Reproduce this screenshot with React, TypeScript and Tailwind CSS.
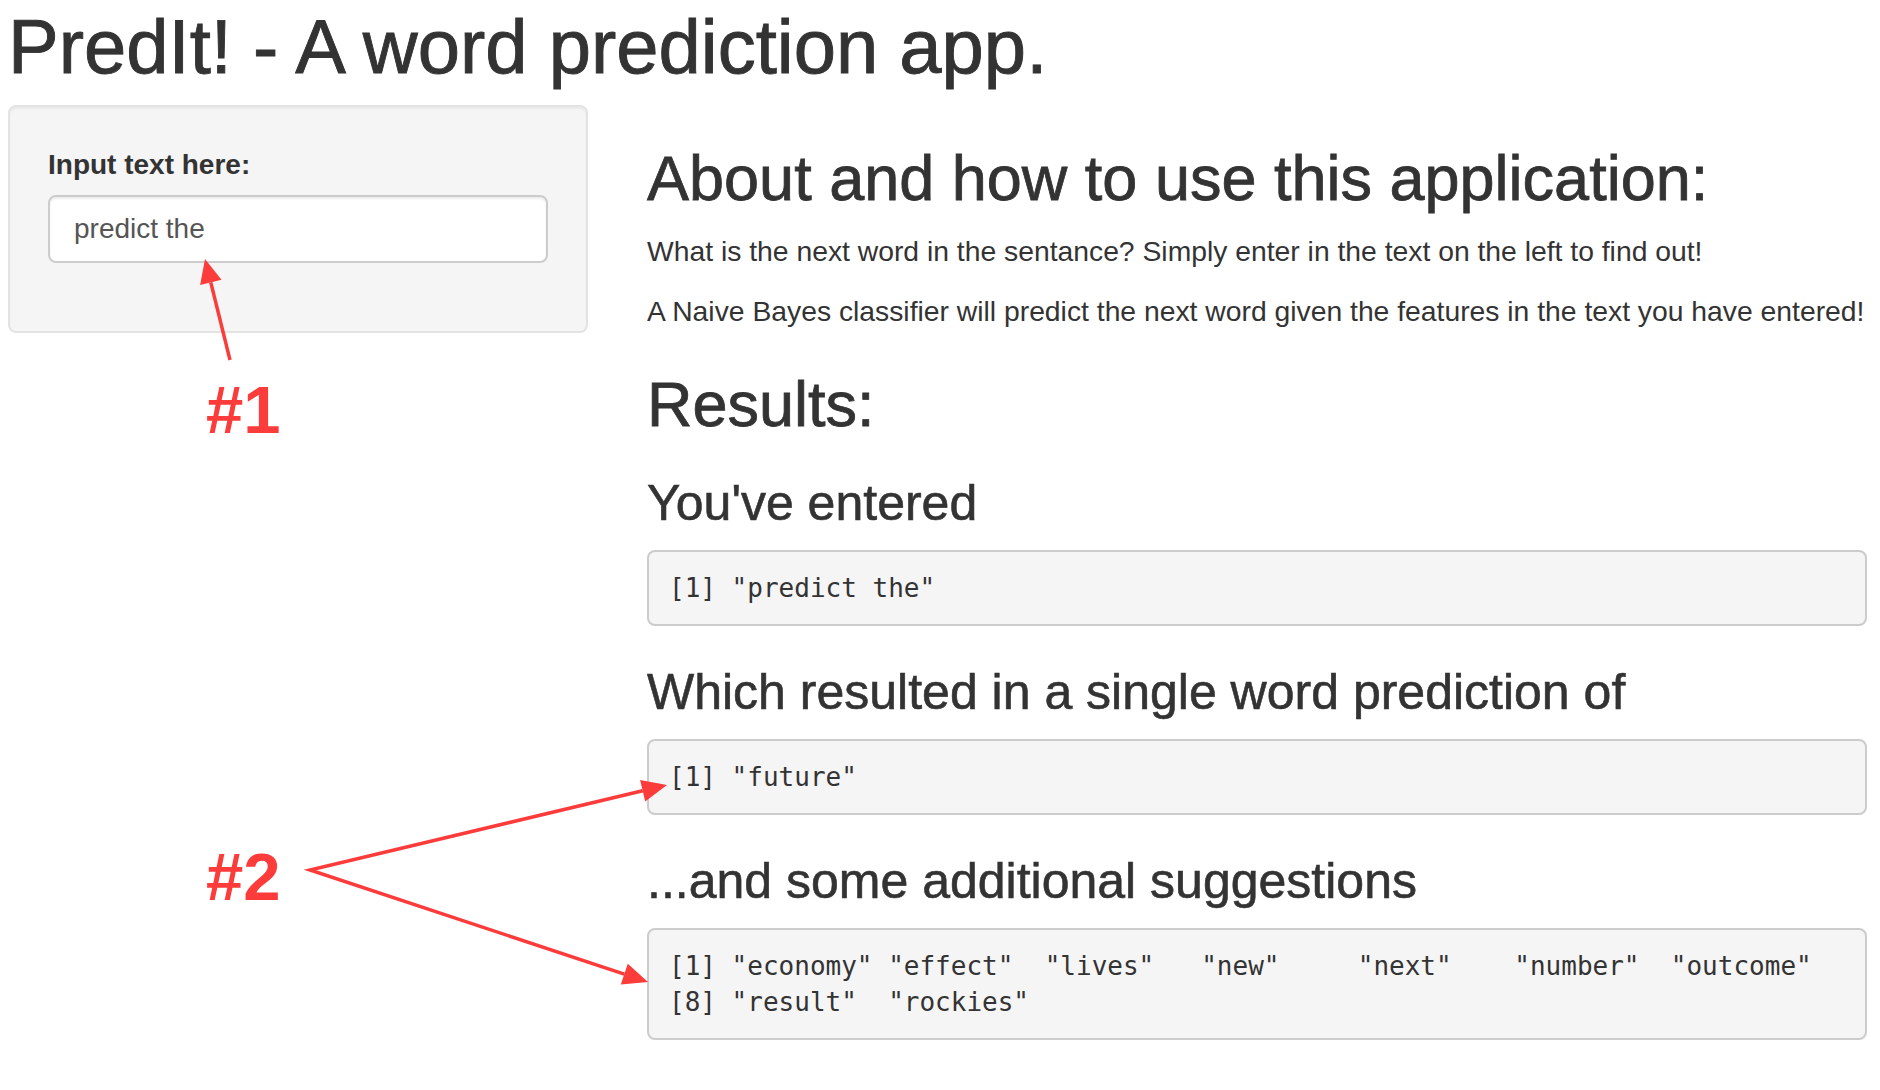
import React from "react";

const RED = "#fc3b3b";

const suggestions = [
  '[1] "economy" "effect"  "lives"   "new"     "next"    "number"  "outcome"',
  '[8] "result"  "rockies"',
];

function Output({ lines }: { lines: string[] }) {
  return (
    <pre className="mb-[20px] block whitespace-pre rounded-[8px] border-2 border-[#ccc] bg-[#f5f5f5] py-[18px] pl-[20px] pr-[18px] font-['DejaVu_Sans_Mono',monospace] text-[26px] leading-[36px] text-[#333]">
      {lines.join("\n")}
    </pre>
  );
}

function Annotations() {
  return (
    <>
      <svg
        width="1880"
        height="1090"
        className="pointer-events-none absolute left-0 top-0"
      >
        {/* #1 arrow */}
        <line x1="230" y1="360" x2="210.8" y2="282.3" stroke={RED} strokeWidth="3.5" />
        <polygon points="205,259 221.5,279.7 200.1,284.9" fill={RED} />
        {/* #2 arrows */}
        <polyline
          points="642.7,790.8 310,870 624.3,974.1"
          fill="none"
          stroke={RED}
          strokeWidth="3.5"
          strokeLinejoin="miter"
          strokeMiterlimit="10"
        />
        <polygon points="667,785 645.2,801.5 640.1,780.1" fill={RED} />
        <polygon points="648,982 620.8,984.5 627.8,963.7" fill={RED} />
      </svg>
      <div className="absolute left-[206px] top-[376px] text-[67px] font-bold leading-none text-[#fc3b3b]">
        #1
      </div>
      <div className="absolute left-[206px] top-[843px] text-[67px] font-bold leading-none text-[#fc3b3b]">
        #2
      </div>
    </>
  );
}

export default function App() {
  return (
    <div className="relative min-h-[1090px] w-[1880px] overflow-hidden bg-white font-['Liberation_Sans',Arial,sans-serif] text-[#333]">
      {/* Title */}
      <div className="pl-[8px] pt-[7px]">
        <h1 className="mb-[19px] text-[76px] leading-[79px] [-webkit-text-stroke:0.9px_#333]">
          PredIt! - A word prediction app.
        </h1>
      </div>

      <div className="flex items-start">
        {/* Sidebar */}
        <div className="ml-[8px] w-[580px] shrink-0 rounded-[8px] border-2 border-[#e3e3e3] bg-[#f5f5f5] p-[38px] shadow-[inset_0_2px_2px_rgba(0,0,0,0.05)]">
          <div className="mb-[30px]">
            <label className="mb-[10px] block text-[28px] font-bold leading-[40px]">
              Input text here:
            </label>
            <input
              type="text"
              defaultValue="predict the"
              className="block h-[68px] w-full rounded-[8px] border-2 border-[#ccc] bg-white px-[24px] py-[12px] font-['Liberation_Sans',Arial,sans-serif] text-[28px] leading-[40px] text-[#555] shadow-[inset_0_2px_2px_rgba(0,0,0,0.075)] outline-none"
            />
          </div>
        </div>

        {/* Main panel */}
        <div className="ml-[59px] w-[1220px] shrink-0">
          <h2 className="mb-[20px] mt-[40px] text-[63px] leading-[66px] [-webkit-text-stroke:0.8px_#333]">
            About and how to use this application:
          </h2>
          <p className="mb-[20px] text-[28.3px] leading-[40px]">
            What is the next word in the sentance? Simply enter in the text on the left to find out!
          </p>
          <p className="mb-[20px] text-[28.3px] leading-[40px]">
            A Naive Bayes classifier will predict the next word given the features in the text you have entered!
          </p>

          <h2 className="mb-[20px] mt-[40px] text-[63px] leading-[66px] [-webkit-text-stroke:0.8px_#333]">
            Results:
          </h2>

          <h3 className="mb-[20px] mt-[40px] text-[50px] leading-[53px] [-webkit-text-stroke:0.6px_#333]">
            You've entered
          </h3>
          <Output lines={['[1] "predict the"']} />

          <h3 className="mb-[20px] mt-[40px] text-[50px] leading-[53px] [-webkit-text-stroke:0.6px_#333]">
            Which resulted in a single word prediction of
          </h3>
          <Output lines={['[1] "future"']} />

          <h3 className="mb-[20px] mt-[40px] text-[50px] leading-[53px] [-webkit-text-stroke:0.6px_#333]">
            ...and some additional suggestions
          </h3>
          <Output lines={suggestions} />
        </div>
      </div>

      <Annotations />
    </div>
  );
}
